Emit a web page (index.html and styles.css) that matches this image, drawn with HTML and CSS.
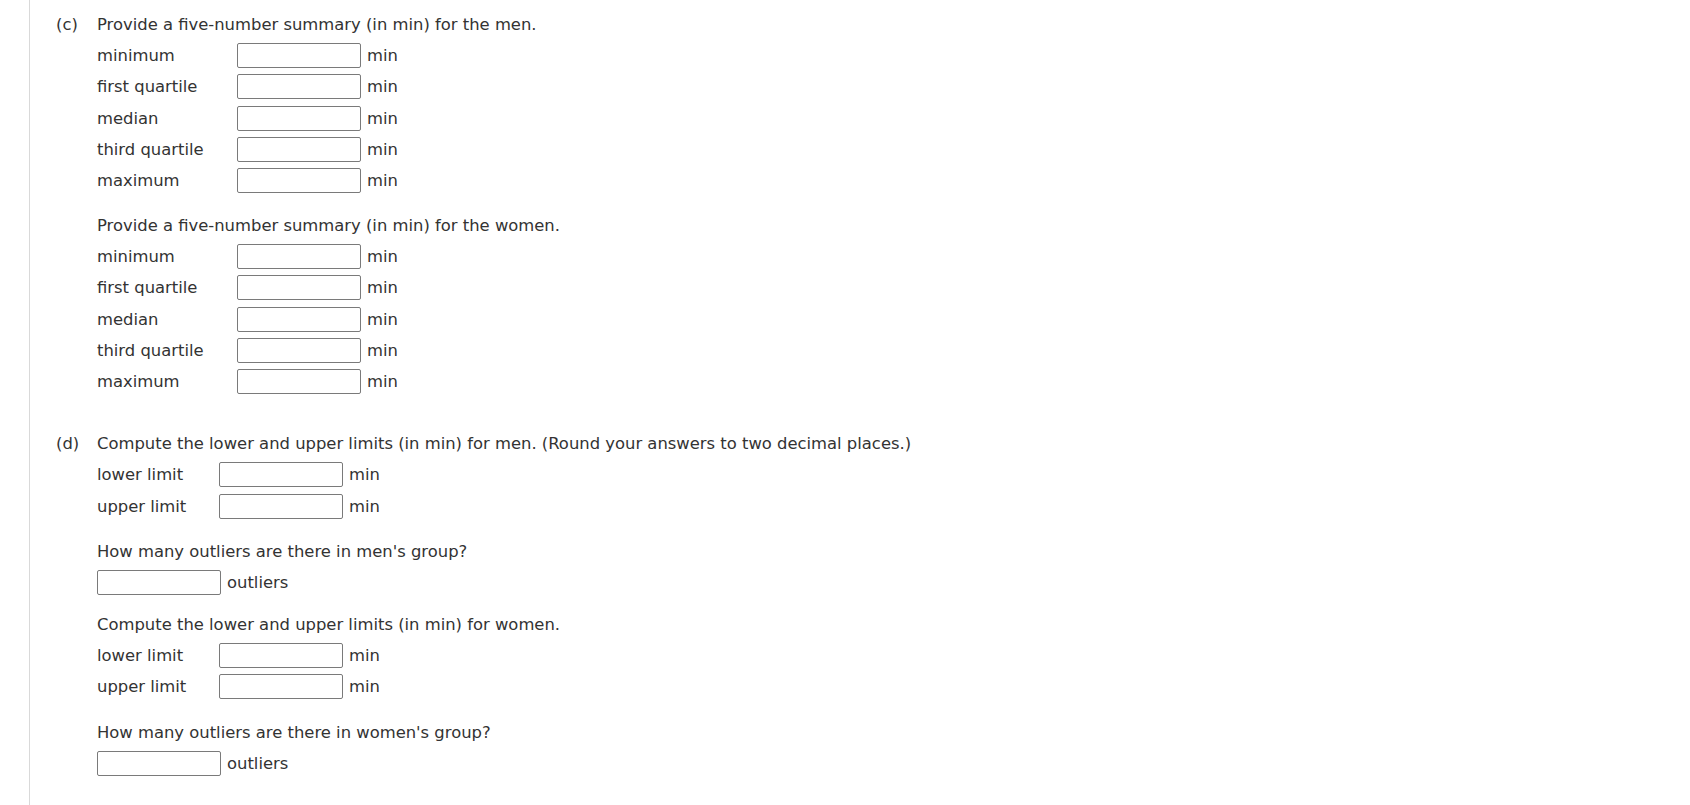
FILE: index.html
```html
<!DOCTYPE html>
<html>
<head>
<meta charset="utf-8">
<link rel="stylesheet" href="styles.css">
</head>
<body>
<div class="page">
  <div class="part">
    <div class="part-label">(c)</div>
    <div class="part-body">
      <div class="block">
        <div class="heading">Provide a five-number summary (in min) for the men.</div>
        <div class="rows rows-wide">
          <div class="lbl">minimum</div><div class="field"><span class="box"></span><span class="unit">min</span></div>
          <div class="lbl">first quartile</div><div class="field"><span class="box"></span><span class="unit">min</span></div>
          <div class="lbl">median</div><div class="field"><span class="box"></span><span class="unit">min</span></div>
          <div class="lbl">third quartile</div><div class="field"><span class="box"></span><span class="unit">min</span></div>
          <div class="lbl">maximum</div><div class="field"><span class="box"></span><span class="unit">min</span></div>
        </div>
      </div>
      <div class="block">
        <div class="heading">Provide a five-number summary (in min) for the women.</div>
        <div class="rows rows-wide">
          <div class="lbl">minimum</div><div class="field"><span class="box"></span><span class="unit">min</span></div>
          <div class="lbl">first quartile</div><div class="field"><span class="box"></span><span class="unit">min</span></div>
          <div class="lbl">median</div><div class="field"><span class="box"></span><span class="unit">min</span></div>
          <div class="lbl">third quartile</div><div class="field"><span class="box"></span><span class="unit">min</span></div>
          <div class="lbl">maximum</div><div class="field"><span class="box"></span><span class="unit">min</span></div>
        </div>
      </div>
    </div>
  </div>
  <div class="part part-gap">
    <div class="part-label">(d)</div>
    <div class="part-body">
      <div class="block">
        <div class="heading">Compute the lower and upper limits (in min) for men. (Round your answers to two decimal places.)</div>
        <div class="rows rows-narrow">
          <div class="lbl">lower limit</div><div class="field"><span class="box"></span><span class="unit">min</span></div>
          <div class="lbl">upper limit</div><div class="field"><span class="box"></span><span class="unit">min</span></div>
        </div>
      </div>
      <div class="block">
        <div class="heading">How many outliers are there in men's group?</div>
        <div class="field single"><span class="box"></span><span class="unit">outliers</span></div>
      </div>
      <div class="block after-single">
        <div class="heading">Compute the lower and upper limits (in min) for women.</div>
        <div class="rows rows-narrow">
          <div class="lbl">lower limit</div><div class="field"><span class="box"></span><span class="unit">min</span></div>
          <div class="lbl">upper limit</div><div class="field"><span class="box"></span><span class="unit">min</span></div>
        </div>
      </div>
      <div class="block last">
        <div class="heading">How many outliers are there in women's group?</div>
        <div class="field single"><span class="box"></span><span class="unit">outliers</span></div>
      </div>
    </div>
  </div>
</div>
</body>
</html>
```
FILE: styles.css
```css
html, body {
  margin: 0;
  padding: 0;
  background: #ffffff;
}
body {
  font-family: "DejaVu Sans", Verdana, sans-serif;
  font-size: 16.4px;
  color: #333333;
}
.page {
  margin-left: 29px;
  border-left: 1px solid #d9d9d9;
  min-height: 100vh;
  box-sizing: border-box;
  padding-top: 12px;
  padding-left: 26px;
}
.part {
  display: flex;
}
.part-gap {
  margin-top: 37px;
}
.part-label {
  width: 41px;
  flex: none;
  line-height: 25px;
}
.part-body {
  display: flex;
  flex-direction: column;
}
.block {
  display: flex;
  flex-direction: column;
  gap: 6px;
}
.block + .block {
  margin-top: 20px;
}
.block.after-single {
  margin-top: 17px;
}
.block.last {
  margin-top: 21px;
}
.heading {
  line-height: 25px;
  height: 25px;
  white-space: nowrap;
}
.rows {
  display: grid;
  row-gap: 6.3px;
  align-items: center;
}
.rows-wide {
  grid-template-columns: 140px auto;
}
.rows-narrow {
  grid-template-columns: 122px auto;
}
.lbl {
  line-height: 25px;
  white-space: nowrap;
}
.field {
  display: flex;
  align-items: center;
  gap: 6px;
  height: 25px;
}
.box {
  display: block;
  width: 122px;
  height: 23px;
  border: 1px solid #7a7a7a;
  border-radius: 2px;
  background: #fff;
}
.unit {
  line-height: 25px;
}
```
